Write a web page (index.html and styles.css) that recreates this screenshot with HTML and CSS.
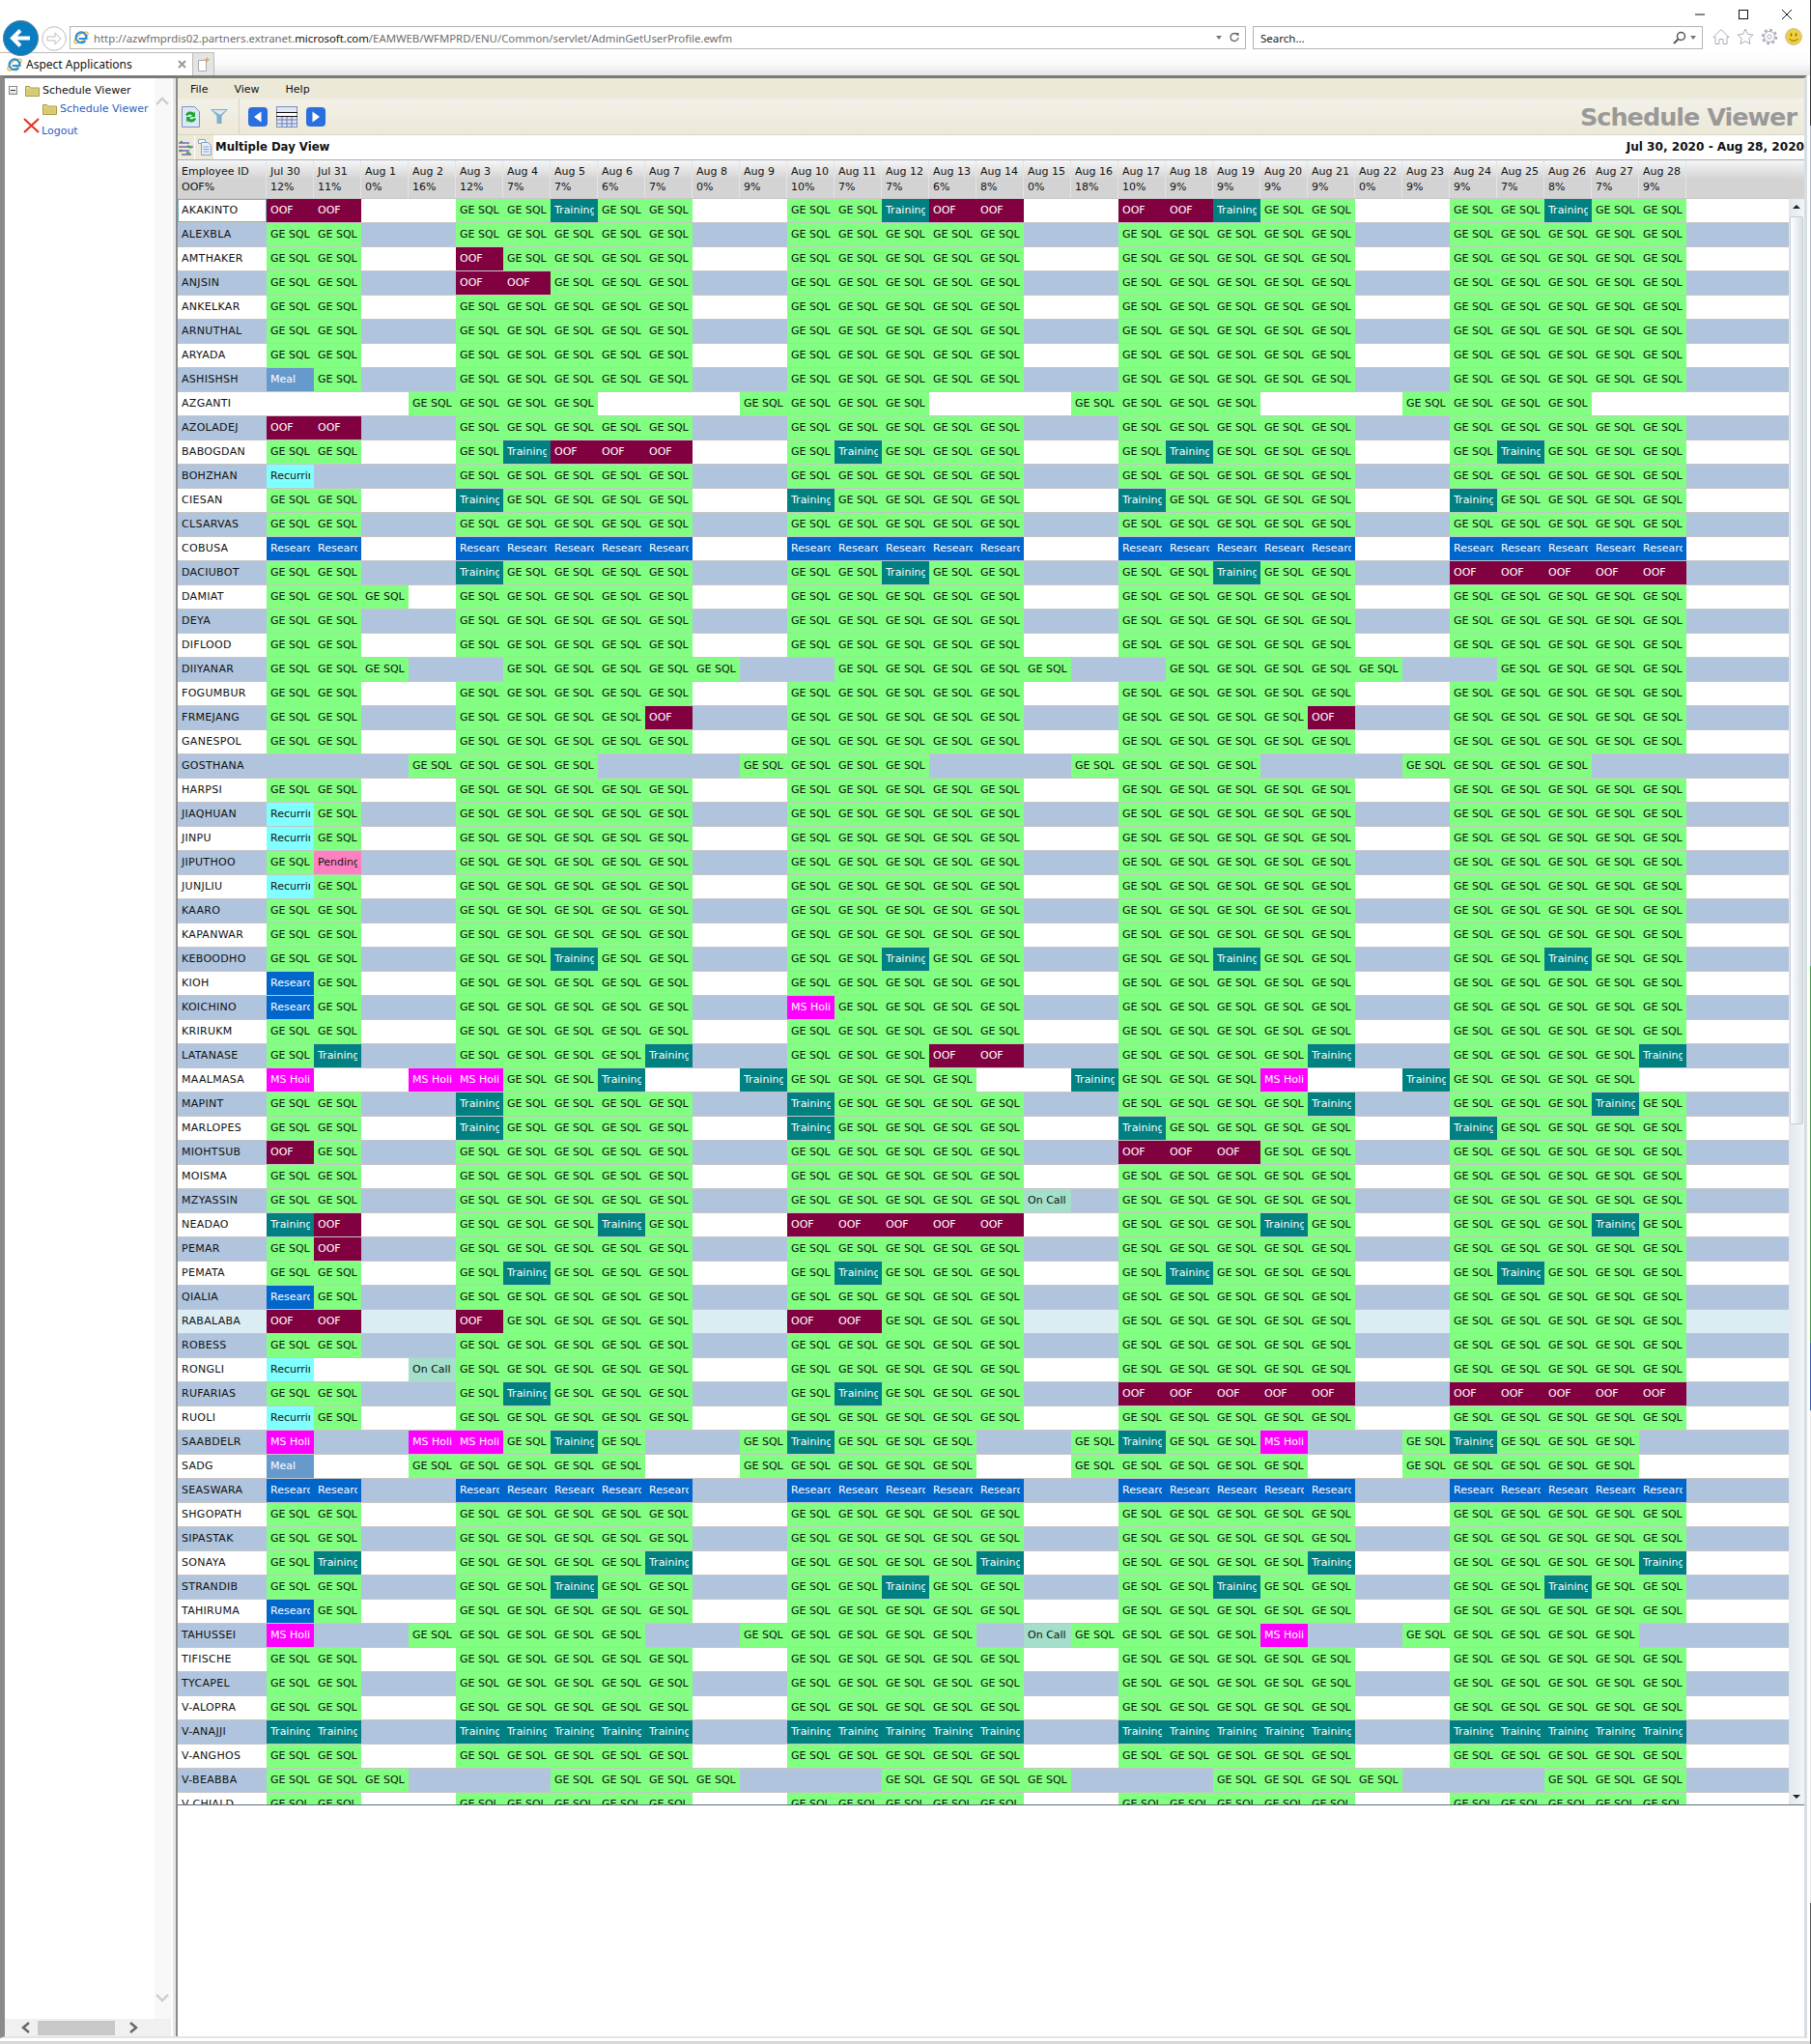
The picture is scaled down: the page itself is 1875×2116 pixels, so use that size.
FILE: index.html
```html
<!DOCTYPE html>
<html lang="en">
<head>
    <meta charset="UTF-8">
    <title>Aspect Applications</title>
    <link rel="stylesheet" href="styles.css">
</head>
<body>
    <svg class="defs" width="0" height="0">
        <defs>
            <symbol id="ie" viewBox="0 0 16 16">
                <ellipse cx="8" cy="8" rx="8.6" ry="3.4" transform="rotate(-38 8 8)" fill="none" stroke="#f0b429" stroke-width="1.3"/>
                <path d="M12.5 10.8A5.4 5.4 0 1 1 13.4 7.6V9H5.6" fill="none" stroke="#2a8fd8" stroke-width="2.2"/>
            </symbol>
            <symbol id="folder" viewBox="0 0 15 12">
                <path d="M.5 11.5V1.5h4l1.2 1.5h8.8v8.5z" fill="#e2d68a" stroke="#a39a45"/>
                <path d="M1.5 4.5h12v6h-12z" fill="#d8ca70"/>
            </symbol>
        </defs>
    </svg>

    <header class="chrome">
        <div class="window-row">
            <svg class="win-btn" width="12" height="12" viewBox="0 0 12 12"><path d="M1 6h10" stroke="#111"/></svg>
            <svg class="win-btn" width="12" height="12" viewBox="0 0 12 12"><rect x="1.5" y="1.5" width="9" height="9" fill="none" stroke="#111"/></svg>
            <svg class="win-btn" width="12" height="12" viewBox="0 0 12 12"><path d="M1 1l10 10M11 1L1 11" stroke="#111"/></svg>
        </div>
        <div class="nav-row">
            <svg class="back" width="37" height="37" viewBox="0 0 37 37">
                <circle cx="18.5" cy="18.5" r="18" fill="#0a7cc0" stroke="#5c7f95"/>
                <path d="M28 18.5H11M18 10.5l-8 8 8 8" fill="none" stroke="#fff" stroke-width="4"/>
            </svg>
            <svg class="forward" width="26" height="26" viewBox="0 0 26 26">
                <circle cx="13" cy="13" r="12.3" fill="#fff" stroke="#bbb"/>
                <path d="M6 11h8V7l6 6-6 6v-4H6z" fill="none" stroke="#bbb"/>
            </svg>
            <div class="address">
                <svg class="favicon" width="16" height="16"><use href="#ie"/></svg>
                <span class="url">http://azwfmprdis02.partners.extranet.<b>microsoft.com</b>/EAMWEB/WFMPRD/ENU/Common/servlet/AdminGetUserProfile.ewfm</span>
                <span class="caret"></span>
                <svg width="12" height="12" viewBox="0 0 12 12"><path d="M9.5 3.5A4 4 0 1 0 10 6" fill="none" stroke="#666" stroke-width="1.4"/><path d="M7 1l3.5 0 0 3.5z" fill="#666"/></svg>
            </div>
            <div class="search">
                <span class="search-text">Search...</span>
                <svg width="14" height="14" viewBox="0 0 14 14"><circle cx="8.5" cy="5.5" r="4" fill="none" stroke="#555" stroke-width="1.5"/><path d="M5.5 8.500L1 13" stroke="#555" stroke-width="2"/></svg>
                <span class="caret"></span>
            </div>
            <div class="tools">
                <svg width="18" height="18" viewBox="0 0 18 18"><path d="M1 9.500L9 1.500l8 8-2 0v7h-4v-5H7v5H3v-7z" fill="#fff" stroke="#aab"/></svg>
                <svg width="18" height="18" viewBox="0 0 18 18"><path d="M9 1l2.400 5.400 5.600.6-4.200 3.800 1.200 5.700L9 13.600l-5 2.900 1.200-5.700L1 7l5.600-.6z" fill="#fff" stroke="#aab"/></svg>
                <svg width="18" height="18" viewBox="0 0 18 18"><circle cx="9" cy="9" r="7" fill="none" stroke="#aab" stroke-width="2.400" stroke-dasharray="2.750 2.750"/><circle cx="9" cy="9" r="5.500" fill="#fff" stroke="#aab"/><circle cx="9" cy="9" r="2.200" fill="#fff" stroke="#aab"/></svg>
                <svg width="18" height="18" viewBox="0 0 18 18"><circle cx="9" cy="9" r="8.400" fill="#f2cf3c" stroke="#bfbfa0"/><path d="M6.500 5.500v3M11.500 5.500v3" stroke="#7a6510" stroke-width="1.400"/><path d="M4.500 11c2 3 7 3 9 0" fill="none" stroke="#7a6510"/></svg>
            </div>
        </div>
        <div class="tab-row">
            <div class="tab">
                <svg width="16" height="16"><use href="#ie"/></svg>
                <span class="tab-title">Aspect Applications</span>
                <svg class="tab-close" width="9" height="9" viewBox="0 0 9 9"><path d="M1 1l7 7M8 1L1 8" stroke="#999" stroke-width="2"/></svg>
            </div>
            <div class="new-tab">
                <svg width="14" height="16" viewBox="0 0 14 16"><path d="M1.500 3.500h8v11h-8z" fill="#fff" stroke="#aaa"/><path d="M10.500 0l1 2 2 .6-2 1-1 2-1-2-1.800-1 1.800-.6z" fill="#f5a623"/></svg>
            </div>
        </div>
    </header>

    <div class="frame">
        <aside class="sidebar">
            <div class="tree-area">
                <div class="tree">
                    <div class="tree-row tree-root">
                        <span class="collapse"></span>
                        <svg width="15" height="12"><use href="#folder"/></svg>
                        <span>Schedule Viewer</span>
                    </div>
                    <div class="tree-row tree-child">
                        <svg width="15" height="12"><use href="#folder"/></svg>
                        <span class="tree-link">Schedule Viewer</span>
                    </div>
                    <div class="tree-row tree-logout">
                        <svg width="17" height="16" viewBox="0 0 17 16"><path d="M1 1l15 14M16 1L1 15" stroke="#e03020" stroke-width="2"/></svg>
                        <span class="tree-link">Logout</span>
                    </div>
                </div>
                <div class="tree-scroll">
                    <svg width="14" height="9" viewBox="0 0 14 9"><path d="M1 8l6-6 6 6" fill="none" stroke="#ccc" stroke-width="2.400"/></svg>
                    <svg width="14" height="9" viewBox="0 0 14 9"><path d="M1 1l6 6 6-6" fill="none" stroke="#ccc" stroke-width="2.400"/></svg>
                </div>
            </div>
            <div class="hscroll">
                <svg width="10" height="12" viewBox="0 0 10 12"><path d="M8 1L2 6l6 5" fill="none" stroke="#666" stroke-width="2.400"/></svg>
                <span class="hscroll-thumb"></span>
                <svg width="10" height="12" viewBox="0 0 10 12"><path d="M2 1l6 5-6 5" fill="none" stroke="#666" stroke-width="2.400"/></svg>
            </div>
        </aside>

        <main class="main">
            <nav class="menubar">
                <span>File</span>
                <span>View</span>
                <span>Help</span>
            </nav>
            <div class="toolbar">
                <svg class="tb-refresh" width="19" height="22" viewBox="0 0 19 22">
                    <path d="M.5.5h13l5 5v16H.5z" fill="#dbe8f8" stroke="#7f93b8"/>
                    <path d="M4 9a5.500 5.500 0 0 1 9-2l1-2v6h-5l2-1.500A3.500 3.500 0 0 0 6 10z" fill="#1aa82e"/>
                    <path d="M15 13a5.500 5.500 0 0 1-9 2l-1 2v-6h5l-2 1.500A3.500 3.500 0 0 0 13 12z" fill="#1aa82e"/>
                </svg>
                <svg class="tb-filter" width="18" height="15" viewBox="0 0 18 15"><path d="M0 0h18l-6.500 7v8h-5V7z" fill="#7fb0c8"/><path d="M2 1h14l-6 5z" fill="#d7eaf2"/></svg>
                <span class="tb-sep"></span>
                <svg width="20" height="20" viewBox="0 0 20 20"><rect width="20" height="20" rx="4" fill="#2a6fe0"/><path d="M13.500 4.500v11L6 10z" fill="#fff"/></svg>
                <svg class="tb-cal" width="22" height="22" viewBox="0 0 22 22">
                    <rect x=".5" y=".5" width="21" height="21" fill="#dfe6f2" stroke="#7f8fb0"/>
                    <path d="M1 10h20M1 14h20M1 18h20M6 10v12M11 10v12M16 10v12" stroke="#6d7db8"/>
                    <rect x="0" y="6.500" width="22" height="4" fill="#fff" stroke="#111"/>
                </svg>
                <svg width="20" height="20" viewBox="0 0 20 20"><rect width="20" height="20" rx="4" fill="#2a6fe0"/><path d="M6.500 4.500v11L14 10z" fill="#fff"/></svg>
                <span class="app-title">Schedule Viewer</span>
            </div>
            <div class="titlebar">
                <span class="tb-icon tb-icon-a">
                    <svg width="15" height="16" viewBox="0 0 15 16"><path d="M0 3h11M0 7h15M0 11h11M3 15h10" stroke="#9a80c8" stroke-width="2"/><path d="M2 1l2 2M9 6l4 2M3 10l-2 2M8 13l4 1" stroke="#3aa84a" stroke-width="2"/></svg>
                </span>
                <span class="tb-icon tb-icon-b">
                    <svg width="14" height="17" viewBox="0 0 14 17"><path d="M.5.5h7v4h-7z" fill="#fff" stroke="#8aa0c8"/><path d="M3.500 3.500h7l3 3v10h-10z" fill="#e6eefa" stroke="#8aa0c8"/><path d="M5.500 8h6M5.500 10.500h6M5.500 13h6" stroke="#8aa0c8"/></svg>
                </span>
                <strong class="view-name">Multiple Day View</strong>
                <strong class="date-range">Jul 30, 2020 - Aug 28, 2020</strong>
            </div>
            <section class="grid-wrap">
                <div class="sched">
                    <div class="sched-head" id="sched-head"></div>
                    <div id="sched-body"></div>
                </div>
                <div class="vscroll">
                    <div class="vscroll-cap"></div>
                    <div class="vscroll-track">
                        <span class="arrow-up"></span>
                        <span class="vscroll-thumb"></span>
                        <span class="arrow-down"></span>
                    </div>
                </div>
            </section>
        </main>
    </div>
    <div class="status-strip"></div>
    <div class="desktop-edge"></div>

    <script src="script.js"></script>
</body>
</html>
```

FILE: styles.css
```css
* {
    box-sizing: border-box;
}
body {
    margin: 0;
    width: 1875px;
    height: 2116px;
    overflow: hidden;
    background: #fff;
    font-family: "DejaVu Sans", sans-serif;
    font-size: 11px;
    color: #111;
    position: relative;
}
.defs {
    display: block;
    height: 0;
}

/* sliver of the window behind the browser */
.desktop-edge {
    position: absolute;
    top: 0;
    right: 0;
    width: 1px;
    height: 2116px;
    background: linear-gradient(#333 130px, #b0b8c8 130px, #b0b8c8 1000px, #40a040 1000px, #40a040 1390px, #3060b0 1390px, #3060b0 1460px, #e8e8e8 1460px, #e8e8e8 1970px, #555 1970px);
}

/* browser chrome */
.chrome {
    height: 78px;
}
.window-row {
    height: 27px;
    padding: 9px 19px 0 0;
    display: flex;
    justify-content: flex-end;
    gap: 33px;
}
.nav-row {
    height: 27px;
    display: flex;
    align-items: flex-start;
}
.back {
    margin: -6px 0 -6px 3px;
    position: relative;
    z-index: 2;
}
.forward {
    margin: 0 0 0 3px;
}
.address {
    margin-left: 3px;
    width: 1218px;
    height: 24px;
    border: 1px solid #b4b4b4;
    padding: 0 5px 0 3px;
    display: flex;
    align-items: center;
    font-family: "Noto Sans", sans-serif;
    font-size: 11.36px;
    color: #6d6d6d;
}
.url {
    margin-left: 5px;
    flex: 1;
    white-space: nowrap;
}
.url b {
    font-weight: normal;
    color: #111;
}
.caret {
    width: 0;
    height: 0;
    margin-right: 7px;
    border-left: 3.5px solid transparent;
    border-right: 3.5px solid transparent;
    border-top: 4px solid #777;
}
.search {
    margin-left: 7px;
    width: 466px;
    height: 24px;
    border: 1px solid #b4b4b4;
    padding-left: 7px;
    display: flex;
    align-items: center;
    gap: 4px;
    font-family: "Noto Sans", sans-serif;
    font-size: 11.5px;
    color: #222;
}
.search-text {
    flex: 1;
}
.search .caret {
    margin: 0 6px 0 0;
}
.tools {
    margin-left: 10px;
    display: flex;
    gap: 7px;
    padding-top: 2px;
}
.tab-row {
    height: 24px;
    display: flex;
    background: linear-gradient(#fff, #fafafa 50%, #e6e6e6);
}
.tab {
    width: 200px;
    background: #fff;
    border: 1px solid #bbb;
    border-bottom: none;
    border-left: none;
    padding-left: 7px;
    display: flex;
    align-items: center;
    gap: 4px;
    font-family: "Noto Sans", sans-serif;
    font-size: 12px;
}
.tab-title {
    flex: 1;
}
.tab-close {
    margin-right: 6px;
}
.new-tab {
    width: 22px;
    background: #e4e4e4;
    border-right: 1px solid #bbb;
    border-top: 1px solid #bbb;
    display: flex;
    align-items: center;
    justify-content: center;
}

/* application frame */
.frame {
    height: 2032px;
    width: 1871px;
    display: flex;
    border-top: 3px solid #7a7a7a;
    border-left: 5px solid #8a8a8a;
    border-right: 3px solid #d8dde2;
    border-bottom: 2px solid #e4e4e4;
}
.sidebar {
    width: 172px;
    display: flex;
    flex-direction: column;
}
.tree-area {
    flex: 1;
    display: flex;
}
.tree {
    flex: 1;
    padding: 6px 0 0 4px;
}
.tree-row {
    display: flex;
    align-items: center;
    gap: 3px;
}
.tree-root {
    height: 13px;
}
.collapse {
    width: 9px;
    height: 9px;
    margin-right: 5px;
    border: 1px solid #888;
    background: linear-gradient(#fff, #dde);
    position: relative;
}
.collapse::after {
    content: "";
    position: absolute;
    left: 1px;
    top: 3px;
    width: 5px;
    height: 1px;
    background: #333;
}
.tree-child {
    height: 13px;
    margin: 6px 0 0 35px;
}
.tree-logout {
    margin: 3px 0 0 15px;
    height: 20px;
    gap: 2px;
    align-items: flex-start;
}
.tree-logout span {
    margin-top: 7px;
}
.tree-link {
    color: #2a5fbf;
}
.tree-scroll {
    width: 17px;
    background: #f8f8f8;
    padding: 19px 0 17px 1px;
    display: flex;
    flex-direction: column;
    justify-content: space-between;
}
.hscroll {
    height: 18px;
    background: #f0f0f0;
    display: flex;
    align-items: center;
    padding-left: 17px;
}
.hscroll-thumb {
    width: 80px;
    height: 15px;
    margin: 0 14px 0 7px;
    background: #c8c8c8;
}

.main {
    width: 1686px;
    flex: none;
    border-left: 2px solid #8a8a8a;
    margin-left: 5px;
    box-shadow: -3px 0 0 #e6e6e6;
}
.menubar {
    height: 21px;
    background: #ece9d8;
    display: flex;
    align-items: center;
    padding: 2px 0 0 13px;
    gap: 27px;
}
.toolbar {
    height: 38px;
    padding: 0 8px 0 4px;
    background: linear-gradient(#f3f0e8, #ece9d8);
    border-bottom: 1px solid #d8d5c4;
    display: flex;
    align-items: center;
}
.tb-filter {
    margin: 0 11px 0 11px;
}
.tb-sep {
    width: 1px;
    height: 38px;
    background: #d8d5c4;
    margin-right: 9px;
}
.tb-cal {
    margin: 0 9px;
}
.app-title {
    margin-left: auto;
    font-size: 25.500px;
    font-weight: bold;
    letter-spacing: -1px;
    color: #999;
}
.titlebar {
    height: 25px;
    display: flex;
    align-items: center;
    background: #fff;
    padding-bottom: 2px;
}
.tb-icon {
    height: 25px;
    margin-bottom: -2px;
    background: #ece9d8;
    display: flex;
    align-items: center;
    justify-content: center;
}
.tb-icon-a {
    width: 18px;
    border-right: 1px solid #fff;
}
.tb-icon-b {
    width: 19px;
}
.view-name {
    margin-left: 2px;
    font-size: 11.7px;
}
.date-range {
    margin-left: auto;
    font-size: 12.100px;
}

/* schedule grid */
.grid-wrap {
    width: 1684px;
    height: 1704px;
    border-top: 1px solid #a4aebc;
    border-bottom: 1px solid #5e7080;
    display: flex;
    overflow: hidden;
}
.sched {
    width: 1668px;
}
.sched-head {
    height: 40px;
    display: flex;
    background: linear-gradient(#f6f6f6, #d3d3d3 50%);
    border-bottom: 1px solid #c8c8c8;
}
.head-cell {
    width: 49px;
    padding: 4px 0 0 4px;
    line-height: 16px;
    border-right: 1px solid #e4e4e4;
}
.head-name {
    width: 92px;
}
.head-rest {
    flex: 1;
    border-right: none;
}
.row {
    height: 25px;
    display: flex;
    border-bottom: 1px solid #c6c6c6;
}
.row-even {
    background: #fff;
}
.row-odd {
    background: #b0c4de;
}
.row-light {
    background: #dcecf3;
}
.name {
    width: 92px;
    padding-left: 4px;
    line-height: 24px;
    letter-spacing: .3px;
    white-space: nowrap;
}
.name-selected {
    box-shadow: inset 0 0 0 1px #6cb8cc;
}
.cell {
    width: 49px;
    padding-left: 4px;
    line-height: 24px;
}
.cell span {
    display: block;
    width: 41px;
    overflow: hidden;
    white-space: nowrap;
}
.ge {
    background: #80ff80;
}
.oof {
    background: #800040;
    color: #fff;
}
.training {
    background: #008080;
    color: #fff;
}
.research {
    background: #0066cc;
    color: #fff;
}
.holiday {
    background: #ff00ff;
    color: #fff;
}
.recurring {
    background: #80ffff;
}
.oncall {
    background: #a3dfca;
}
.pending {
    background: #ff80c0;
}
.meal {
    background: #6699cc;
    color: #fff;
}
.vscroll {
    width: 16px;
    display: flex;
    flex-direction: column;
}
.vscroll-cap {
    height: 40px;
    background: linear-gradient(#f6f6f6, #d3d3d3 50%);
}
.vscroll-track {
    flex: 1;
    background: linear-gradient(90deg, #e2e8ee, #f2f5f8);
    display: flex;
    flex-direction: column;
    align-items: center;
    padding: 6px 0;
}
.arrow-up,
.arrow-down {
    width: 0;
    height: 0;
    border-left: 4px solid transparent;
    border-right: 4px solid transparent;
}
.arrow-up {
    border-bottom: 4px solid #222;
}
.arrow-down {
    margin-top: auto;
    border-top: 4px solid #222;
}
.vscroll-thumb {
    width: 14px;
    height: 940px;
    margin-top: 8px;
    background: linear-gradient(90deg, #fff, #d8dfe6);
    border: 1px solid #c4ccd4;
    border-radius: 2px;
}
.status-strip {
    height: 6px;
    background: #fff;
    border-top: 3px solid #fff;
    border-bottom: 3px solid #d8d8d8;
}
```

FILE: script.js
```js
// cell codes used in the row strings
const kinds = {
    g: ['ge', 'GE SQL'],
    O: ['oof', 'OOF'],
    T: ['training', 'Training'],
    R: ['research', 'Research'],
    M: ['holiday', 'MS Holiday'],
    C: ['recurring', 'Recurring'],
    N: ['oncall', 'On Call'],
    P: ['pending', 'Pending'],
    L: ['meal', 'Meal']
};

const days = [
    ['Jul 30', 12], ['Jul 31', 11], ['Aug 1', 0], ['Aug 2', 16], ['Aug 3', 12], ['Aug 4', 7],
    ['Aug 5', 7], ['Aug 6', 6], ['Aug 7', 7], ['Aug 8', 0], ['Aug 9', 9], ['Aug 10', 10],
    ['Aug 11', 7], ['Aug 12', 7], ['Aug 13', 6], ['Aug 14', 8], ['Aug 15', 0], ['Aug 16', 18],
    ['Aug 17', 10], ['Aug 18', 9], ['Aug 19', 9], ['Aug 20', 9], ['Aug 21', 9], ['Aug 22', 0],
    ['Aug 23', 9], ['Aug 24', 9], ['Aug 25', 7], ['Aug 26', 8], ['Aug 27', 7], ['Aug 28', 9]
];

const WEEK = 'gg__ggggg__ggggg__ggggg__ggggg';
const SPLIT = '___gggg___gggg___gggg___gggg__';

const rows = [
    ['AKAKINTO', 'OO__ggTgg__ggTOO__OOTgg__ggTgg'],
    ['ALEXBLA', WEEK],
    ['AMTHAKER', 'gg__Ogggg__ggggg__ggggg__ggggg'],
    ['ANJSIN', 'gg__OOggg__ggggg__ggggg__ggggg'],
    ['ANKELKAR', WEEK],
    ['ARNUTHAL', WEEK],
    ['ARYADA', WEEK],
    ['ASHISHSH', 'Lg__ggggg__ggggg__ggggg__ggggg'],
    ['AZGANTI', SPLIT],
    ['AZOLADEJ', 'OO__ggggg__ggggg__ggggg__ggggg'],
    ['BABOGDAN', 'gg__gTOOO__gTggg__gTggg__gTggg'],
    ['BOHZHAN', 'C___ggggg__ggggg__ggggg__ggggg'],
    ['CIESAN', 'gg__Tgggg__Tgggg__Tgggg__Tgggg'],
    ['CLSARVAS', WEEK],
    ['COBUSA', 'RR__RRRRR__RRRRR__RRRRR__RRRRR'],
    ['DACIUBOT', 'gg__Tgggg__ggTgg__ggTgg__OOOOO'],
    ['DAMIAT', 'ggg_ggggg__ggggg__ggggg__ggggg'],
    ['DEYA', WEEK],
    ['DIFLOOD', WEEK],
    ['DIIYANAR', 'ggg__ggggg__ggggg__ggggg__gggg'],
    ['FOGUMBUR', WEEK],
    ['FRMEJANG', 'gg__ggggO__ggggg__ggggO__ggggg'],
    ['GANESPOL', WEEK],
    ['GOSTHANA', SPLIT],
    ['HARPSI', WEEK],
    ['JIAQHUAN', 'Cg__ggggg__ggggg__ggggg__ggggg'],
    ['JINPU', 'Cg__ggggg__ggggg__ggggg__ggggg'],
    ['JIPUTHOO', 'gP__ggggg__ggggg__ggggg__ggggg'],
    ['JUNJLIU', 'Cg__ggggg__ggggg__ggggg__ggggg'],
    ['KAARO', WEEK],
    ['KAPANWAR', WEEK],
    ['KEBOODHO', 'gg__ggTgg__ggTgg__ggTgg__ggTgg'],
    ['KIOH', 'Rg__ggggg__ggggg__ggggg__ggggg'],
    ['KOICHINO', 'Rg__ggggg__Mgggg__ggggg__ggggg'],
    ['KRIRUKM', WEEK],
    ['LATANASE', 'gT__ggggT__gggOO__ggggT__ggggT'],
    ['MAALMASA', 'M__MMggT__Tgggg__TgggM__Tgggg_'],
    ['MAPINT', 'gg__Tgggg__Tgggg__ggggT__gggTg'],
    ['MARLOPES', 'gg__Tgggg__Tgggg__Tgggg__Tgggg'],
    ['MIOHTSUB', 'Og__ggggg__ggggg__OOOgg__ggggg'],
    ['MOISMA', WEEK],
    ['MZYASSIN', 'gg__ggggg__gggggN_ggggg__ggggg'],
    ['NEADAO', 'TO__gggTg__OOOOO__gggTg__gggTg'],
    ['PEMAR', 'gO__ggggg__ggggg__ggggg__ggggg'],
    ['PEMATA', 'gg__gTggg__gTggg__gTggg__gTggg'],
    ['QIALIA', 'Rg__ggggg__ggggg__ggggg__ggggg'],
    ['RABALABA', 'OO__Ogggg__OOggg__ggggg__ggggg'],
    ['ROBESS', WEEK],
    ['RONGLI', 'C__Nggggg__ggggg__ggggg__ggggg'],
    ['RUFARIAS', 'gg__gTggg__gTggg__OOOOO__OOOOO'],
    ['RUOLI', 'Cg__ggggg__ggggg__ggggg__ggggg'],
    ['SAABDELR', 'M__MMgTg__gTggg__gTggM__gTggg_'],
    ['SADG', 'L__ggggg__ggggg__ggggg__ggggg_'],
    ['SEASWARA', 'RR__RRRRR__RRRRR__RRRRR__RRRRR'],
    ['SHGOPATH', WEEK],
    ['SIPASTAK', WEEK],
    ['SONAYA', 'gT__ggggT__ggggT__ggggT__ggggT'],
    ['STRANDIB', 'gg__ggTgg__ggTgg__ggTgg__ggTgg'],
    ['TAHIRUMA', 'Rg__ggggg__ggggg__ggggg__ggggg'],
    ['TAHUSSEI', 'M__ggggg__ggggg_NggggM__ggggg_'],
    ['TIFISCHE', WEEK],
    ['TYCAPEL', WEEK],
    ['V-ALOPRA', WEEK],
    ['V-ANAJJI', 'TT__TTTTT__TTTTT__TTTTT__TTTTT'],
    ['V-ANGHOS', WEEK],
    ['V-BEABBA', 'ggg___gggg___gggg___gggg___ggg'],
    ['V-CHJALD', WEEK]
];

let head = '<div class="head-cell head-name">Employee ID<br>OOF%</div>';
days.forEach(function(day) {
    head += '<div class="head-cell">' + day[0] + '<br>' + day[1] + '%</div>';
});
head += '<div class="head-cell head-rest"></div>';
document.getElementById('sched-head').innerHTML = head;

let body = '';
rows.forEach(function(row, index) {
    let rowClass = index % 2 ? 'row-odd' : 'row-even';
    if (row[0] === 'RABALABA') rowClass = 'row-light';
    const nameClass = index === 0 ? 'name name-selected' : 'name';
    let cells = '';
    for (const code of row[1]) {
        if (code === '_') {
            cells += '<div class="cell"></div>';
        } else {
            cells += '<div class="cell ' + kinds[code][0] + '"><span>' + kinds[code][1] + '</span></div>';
        }
    }
    body += '<div class="row ' + rowClass + '"><div class="' + nameClass + '">' + row[0] + '</div>' + cells + '</div>';
});
document.getElementById('sched-body').innerHTML = body;
```
